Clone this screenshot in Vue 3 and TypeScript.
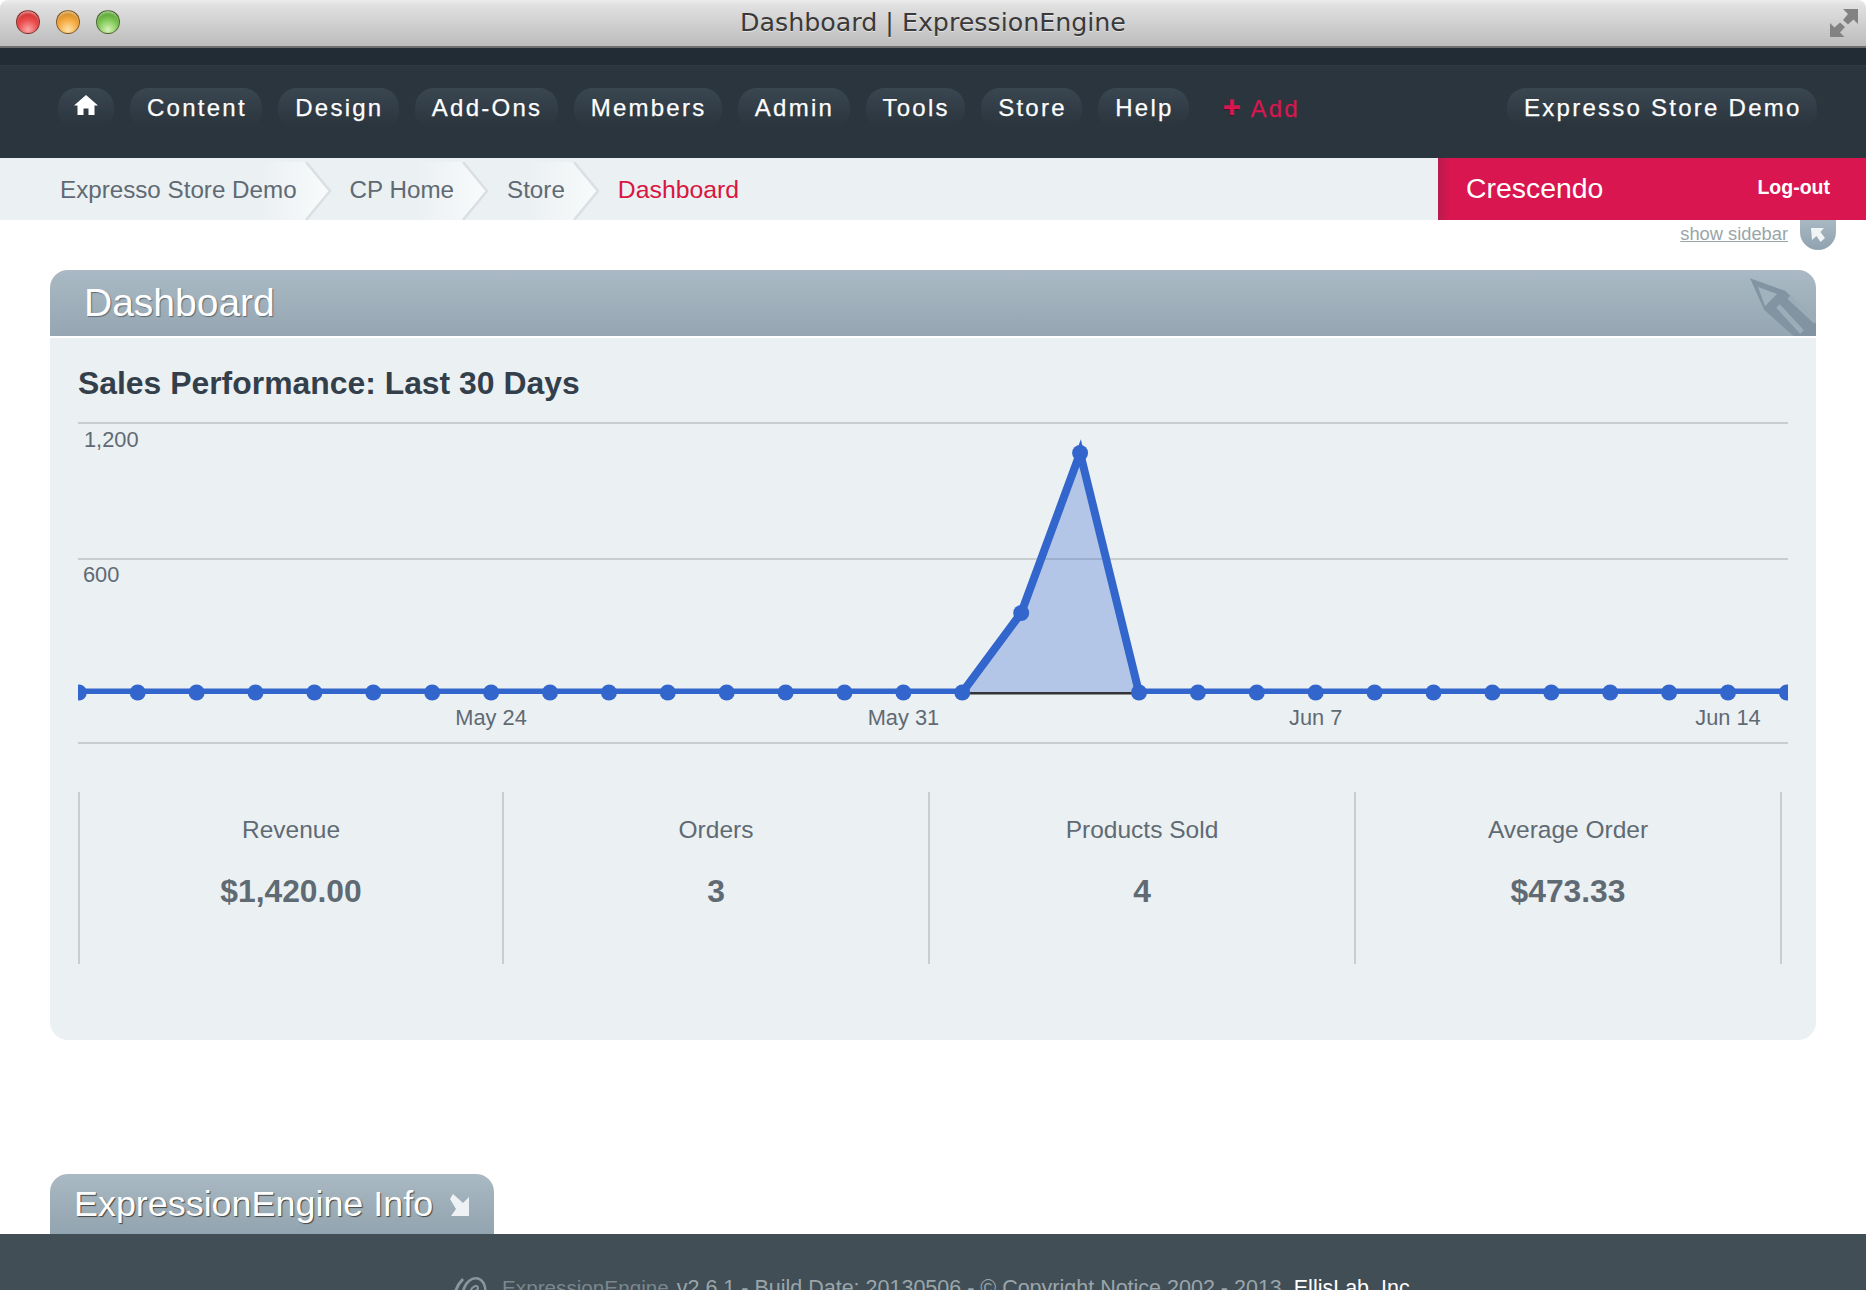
<script setup lang="ts">
const navItems: string[] = ['Content', 'Design', 'Add-Ons', 'Members', 'Admin', 'Tools', 'Store', 'Help']
const crumbs: string[] = ['Expresso Store Demo', 'CP Home', 'Store']

interface Stat { label: string; value: string }
const stats: Stat[] = [
  { label: 'Revenue', value: '$1,420.00' },
  { label: 'Orders', value: '3' },
  { label: 'Products Sold', value: '4' },
  { label: 'Average Order', value: '$473.33' },
]

const step = 58.9
const start = 0.8
const base = 270.5
const values: number[] = Array.from({ length: 30 }, (_, i) => (i === 16 ? 79.5 : i === 17 ? 239.5 : 0))
const points = values.map((v, i) => ({ x: +(start + i * step).toFixed(2), y: +(base - v).toFixed(2) }))
const line = points.map((p) => `${p.x},${p.y}`).join(' ')
const area = `${points[15].x},${base} ${points[16].x},${points[16].y} ${points[17].x},${points[17].y} ${points[18].x},${base}`
const dateLabels = [
  { text: 'May 24', i: 7 },
  { text: 'May 31', i: 14 },
  { text: 'Jun 7', i: 21 },
  { text: 'Jun 14', i: 28 },
].map((d) => ({ text: d.text, x: +(start + d.i * step).toFixed(2) }))
</script>

<template>
  <div class="app">
    <header class="titlebar">
      <div class="lights">
        <span class="light red"></span>
        <span class="light amber"></span>
        <span class="light green"></span>
      </div>
      <span class="window-title">Dashboard | ExpressionEngine</span>
      <svg class="expand" width="28" height="28" viewBox="0 0 28 28" aria-hidden="true">
        <path d="M13 0H28V15L23.500 10.500L18 15.500L13 11L18 5Z" fill="#828282" />
        <path d="M0 14L4.500 18.500L10 13.500L15 18L10 23.500L14.500 28H0Z" fill="#828282" />
      </svg>
    </header>

    <div class="strip"></div>

    <nav class="mainnav">
      <a class="pill home" aria-label="Home">
        <svg width="24" height="20" viewBox="0 0 24 20" aria-hidden="true">
          <path d="M12 0L24 10.500H20.500V20H14.500V13.500H9.500V20H3.500V10.500H0Z" fill="#fff" />
        </svg>
      </a>
      <a v-for="item in navItems" :key="item" class="pill">{{ item }}</a>
      <a class="add"><span class="plus">+</span><span>Add</span></a>
      <a class="pill site">Expresso Store Demo</a>
    </nav>

    <div class="crumbbar">
      <div class="crumbs">
        <span v-for="c in crumbs" :key="c" class="crumb">
          <svg class="chev" width="72" height="58" viewBox="0 0 72 58" aria-hidden="true">
            <defs>
              <linearGradient :id="'fade-' + c.length" x1="0" x2="1" y1="0" y2="0">
                <stop offset="0" stop-color="#f9fbfb" stop-opacity="0" />
                <stop offset="1" stop-color="#f9fbfb" />
              </linearGradient>
            </defs>
            <path d="M0 0H46L70 29L46 58H0Z" :fill="'url(#fade-' + c.length + ')'" />
            <path d="M46 0L70 29L46 58" fill="none" stroke="#d9dfe2" stroke-width="2.500" />
          </svg>
          <span class="crumb-text">{{ c }}</span>
        </span>
        <span class="crumb current"><span class="crumb-text">Dashboard</span></span>
      </div>
      <div class="account">
        <span class="account-name">Crescendo</span>
        <a class="logout">Log-out</a>
      </div>
    </div>

    <div class="sidebar-row">
      <a class="show-sidebar">show sidebar</a>
      <span class="sidebar-tab">
        <svg width="14" height="15" viewBox="0 0 14 15" aria-hidden="true">
          <path d="M0 0H13L9.500 4L14 10L9.500 14L5.500 8L1 12Z" fill="#f1f4f5" />
        </svg>
      </span>
    </div>

    <main class="panel">
      <div class="panel-head">
        <h1>Dashboard</h1>
        <svg class="pencil" width="66" height="66" viewBox="0 0 66 66" aria-hidden="true">
          <path d="M0 8.300L35 20.700L66 50V66H43.500L14.300 40Z" fill="#8294a1" />
          <path d="M8 17L27 24L15 36Z" fill="#a2b2bd" />
          <path d="M28 36L52 62M39 27L66 52" stroke="#9dadb8" stroke-width="5" fill="none" />
        </svg>
      </div>

      <div class="panel-body">
        <h2>Sales Performance: Last 30 Days</h2>

        <svg class="chart" width="1710" height="322" viewBox="0 0 1710 322" role="img" aria-label="Sales chart">
          <defs>
            <clipPath id="plot-clip">
              <rect x="0" y="0" width="1710" height="272" />
            </clipPath>
          </defs>
          <line x1="0" x2="1710" y1="1" y2="1" class="grid" />
          <line x1="0" x2="1710" y1="137" y2="137" class="grid" />
          <line x1="0" x2="1710" y1="321" y2="321" class="grid" />
          <text x="6" y="25" class="axis">1,200</text>
          <text x="5" y="160" class="axis">600</text>
          <polygon :points="area" fill="#3366cc" fill-opacity="0.3" />
          <line :x1="points[15].x" :x2="points[18].x" y1="271.300" y2="271.300" stroke="#333" stroke-width="2.400" />
          <polyline :points="line" clip-path="url(#plot-clip)" fill="none" stroke="#3366cc" stroke-width="8" stroke-miterlimit="10" />
          <circle v-for="(p, i) in points" :key="i" :cx="p.x" :cy="p.y" r="8" fill="#3366cc" />
          <text v-for="d in dateLabels" :key="d.text" :x="d.x" y="303" text-anchor="middle" class="axis">{{ d.text }}</text>
        </svg>

        <div class="stats">
          <div v-for="s in stats" :key="s.label" class="stat">
            <div class="stat-label">{{ s.label }}</div>
            <div class="stat-value">{{ s.value }}</div>
          </div>
        </div>
      </div>
    </main>

    <div class="spacer"></div>

    <div class="info-tab">
      <span>ExpressionEngine Info</span>
      <svg width="22" height="22" viewBox="0 0 22 22" aria-hidden="true">
        <path d="M3 0L13 9L19 3V22H1L6 15L0 5Z" fill="#eef2f4" />
      </svg>
    </div>

    <footer class="footer">
      <svg class="ee-logo" width="40" height="36" viewBox="0 0 40 36" aria-hidden="true">
        <path d="M11 3C5 9 2 16 2 26" fill="none" stroke="#8a969c" stroke-width="3" />
        <ellipse cx="22" cy="17" rx="11" ry="15" fill="none" stroke="#8a969c" stroke-width="2.500" transform="rotate(15 22 17)" />
        <path d="M18 16C20 10 26 8 26 12C26 15 21 16 17 17" fill="none" stroke="#8a969c" stroke-width="2" />
      </svg>
      <span class="ee-name">ExpressionEngine</span>
      <span class="build"> v2.6.1 - Build Date: 20130506 - © Copyright Notice 2002 - 2013&nbsp; <a class="ellis">EllisLab, Inc.</a></span>
    </footer>
  </div>
</template>

<style scoped>
.app {
  width: 1866px;
  height: 1290px;
  overflow: hidden;
  display: flex;
  flex-direction: column;
  background: #fff;
  font-family: "Liberation Sans", Arial, sans-serif;
}

.titlebar {
  height: 48px;
  flex: none;
  display: flex;
  align-items: center;
  justify-content: center;
  position: relative;
  box-sizing: border-box;
  border-bottom: 2px solid #6e6e6e;
  border-radius: 8px 8px 0 0;
  background: linear-gradient(#ececec, #e0e0e0 12%, #bcbcbc);
}
.lights {
  position: absolute;
  left: 16px;
  top: 10px;
  display: flex;
  gap: 16px;
}
.light {
  width: 24px;
  height: 24px;
  border-radius: 50%;
  box-sizing: border-box;
  border: 1px solid rgba(60, 40, 30, 0.55);
}
.red {
  background: radial-gradient(circle at 50% 85%, #f9a6a6 0, #ec4e4e 45%, #c92a2a 85%), #d33;
  box-shadow: inset 0 3px 2px -1px rgba(255, 255, 255, 0.45);
}
.amber {
  background: radial-gradient(circle at 50% 85%, #fde2a6 0, #f5ac45 45%, #c98317 85%), #da3;
  box-shadow: inset 0 3px 2px -1px rgba(255, 255, 255, 0.45);
}
.green {
  background: radial-gradient(circle at 50% 85%, #d8f2b8 0, #82ca5a 45%, #4e9a2b 85%), #6b3;
  box-shadow: inset 0 3px 2px -1px rgba(255, 255, 255, 0.45);
}
.window-title {
  font-family: "DejaVu Sans", sans-serif;
  font-size: 25.300px;
  color: #3a3a3a;
  text-shadow: 0 1px 0 rgba(255, 255, 255, 0.5);
  margin-bottom: 2px;
}
.expand {
  position: absolute;
  right: 8px;
  top: 9px;
}

.strip {
  height: 18px;
  flex: none;
  background: #212c34;
  border-bottom: 1px solid #2e3a45;
  box-sizing: border-box;
}

.mainnav {
  height: 92px;
  flex: none;
  box-sizing: border-box;
  background: #2a353e;
  padding: 22px 49px 0 58px;
  display: flex;
  align-items: flex-start;
  gap: 16px;
}
.pill {
  height: 38px;
  line-height: 39px;
  padding: 0 15.400px 0 17px;
  border-radius: 19px 19px 14px 14px;
  background: linear-gradient(#3a4650, #2a353e);
  color: #fff;
  font-size: 24px;
  letter-spacing: 2.250px;
  white-space: nowrap;
  -webkit-text-stroke: 0.25px #fff;
}
.home {
  width: 56px;
  padding: 0;
  display: flex;
  align-items: center;
  justify-content: center;
}
.home svg {
  margin-bottom: 4px;
}
.add {
  margin-left: 18px;
  display: flex;
  align-items: baseline;
  gap: 10px;
  line-height: 42px;
  color: #d9164f;
  font-size: 24px;
  letter-spacing: 2.250px;
  white-space: nowrap;
  -webkit-text-stroke: 0.25px #d9164f;
}
.plus {
  font-size: 30px;
  font-weight: 700;
  line-height: 30px;
  letter-spacing: 0;
  -webkit-text-stroke: 0.6px #d9164f;
  text-shadow: 0 1px 0 #111;
}
.site {
  margin-left: auto;
}

.crumbbar {
  height: 62px;
  flex: none;
  display: flex;
  background: #ebf0f3;
}
.crumbs {
  flex: 1;
  display: flex;
  align-items: center;
  padding-left: 60px;
  font-size: 24.200px;
  color: #5f6a73;
}
.crumb {
  position: relative;
  height: 100%;
  display: flex;
  align-items: center;
  padding-right: 34px;
  margin-right: 19px;
  white-space: nowrap;
}
.crumb-text {
  position: relative;
  top: 1px;
}
.chev {
  position: absolute;
  right: -1px;
  top: 4px;
}
.current {
  color: #d9163f;
  font-size: 24.800px;
}
.account {
  width: 428px;
  box-sizing: border-box;
  background: linear-gradient(90deg, #b61c4e, #d9164f 12px);
  display: flex;
  align-items: center;
  justify-content: space-between;
  padding: 0 36px 0 28px;
  color: #fff;
}
.account-name {
  font-size: 28.400px;
  margin-bottom: 2px;
}
.logout {
  font-size: 19.500px;
  font-weight: 700;
  margin-bottom: 3px;
}

.sidebar-row {
  height: 50px;
  flex: none;
  display: flex;
  justify-content: flex-end;
  align-items: flex-start;
  gap: 12px;
  padding-right: 30px;
}
.show-sidebar {
  font-size: 18.300px;
  color: #9aa5a8;
  text-decoration: underline;
  line-height: 28px;
}
.sidebar-tab {
  width: 36px;
  height: 30px;
  border-radius: 0 0 18px 18px;
  background: linear-gradient(#a8b8c3, #8fa2af);
  display: flex;
  align-items: center;
  justify-content: center;
}

.panel {
  flex: none;
  margin: 0 50px;
  height: 770px;
  border-radius: 18px;
  background: #ebf0f3;
  overflow: hidden;
}
.panel-head {
  height: 66px;
  position: relative;
  background: linear-gradient(#abb9c5, #a5b6c1 20%, #95a6b2);
  border-bottom: 2px solid #fff;
  overflow: hidden;
}
.panel-head h1 {
  margin: 0;
  padding-left: 34px;
  line-height: 66px;
  font-size: 39px;
  font-weight: 400;
  color: #fff;
  text-shadow: 1px 1px 1px #5d6a73;
}
.pencil {
  position: absolute;
  right: 0;
  top: 0;
}
.panel-body {
  padding: 0 28px;
}
.panel-body h2 {
  margin: 0;
  padding-top: 27px;
  padding-bottom: 21px;
  height: 36px;
  line-height: 36px;
  font-size: 31.900px;
  font-weight: 700;
  color: #333f4a;
}
.chart {
  display: block;
  overflow: hidden;
}
.grid {
  stroke: #c9cdcf;
  stroke-width: 2;
}
.axis {
  font-family: "Liberation Sans", Arial, sans-serif;
  font-size: 21.800px;
  fill: #5f6a73;
}
.stats {
  margin: 48px 6px 0 0;
  display: grid;
  grid-template-columns: 424px 426px 426px 426px;
  height: 172px;
  color: #5f6a73;
  border-right: 2px solid #c9cdcf;
}
.stat {
  border-left: 2px solid #c9cdcf;
  text-align: center;
}
.stat-label {
  padding-top: 23px;
  line-height: 30px;
  font-size: 24.500px;
}
.stat-value {
  margin-top: 27px;
  line-height: 38px;
  font-size: 31.800px;
  font-weight: 700;
}

.spacer {
  flex: 1;
}
.info-tab {
  flex: none;
  width: 444px;
  height: 60px;
  margin-left: 50px;
  box-sizing: border-box;
  padding: 1px 0 0 24px;
  display: flex;
  align-items: center;
  gap: 17px;
  border-radius: 18px 18px 0 0;
  background: linear-gradient(#aab9c3, #92a4af);
  color: #fff;
  font-size: 35.900px;
  text-shadow: 1px 1px 1px #444;
}
.footer {
  height: 56px;
  flex: none;
  box-sizing: border-box;
  background: #414e55;
  padding: 41px 0 0 452px;
  font-size: 21.500px;
  line-height: 26px;
  color: #9aa5ab;
  display: flex;
  align-items: flex-start;
  white-space: pre;
}
.ee-logo {
  margin: 1px 10px 0 0;
  flex: none;
}
.ee-name {
  font-size: 20.700px;
  color: #7a878e;
}
.build {
  margin-left: 2px;
}
.ellis {
  color: #fff;
}
</style>
